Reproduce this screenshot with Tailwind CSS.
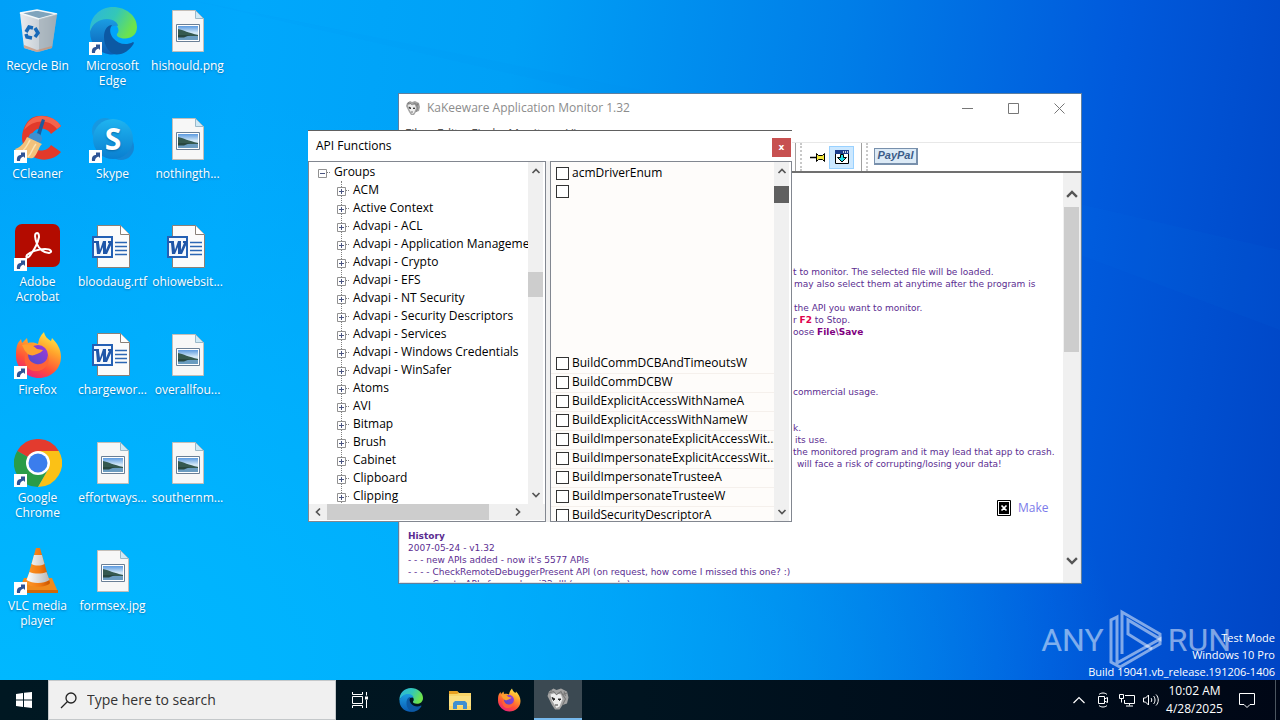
<!DOCTYPE html>
<html lang="en">
<head>
<meta charset="utf-8">
<title>Desktop</title>
<script src="https://cdn.jsdelivr.net/npm/@tailwindcss/browser@4"></script>
</head>
<body class="relative flex h-screen flex-col overflow-hidden bg-[linear-gradient(97deg,#00a0f8_0%,#00a8fc_18%,#00a0f6_38%,#007ee8_62%,#005adc_82%,#0044c4_100%)] font-['Open_Sans','Noto_Sans',sans-serif] text-xs">

<svg class="absolute size-0" aria-hidden="true">
  <defs>
    <linearGradient id="edgeA" x1="0" y1="0" x2="1" y2=".4"><stop offset="0" stop-color="#2cb4e0"/><stop offset=".55" stop-color="#33c7b8"/><stop offset="1" stop-color="#6de34c"/></linearGradient>
    <linearGradient id="edgeB" x1="0" y1="0" x2="0" y2="1"><stop offset="0" stop-color="#1b9de2"/><stop offset="1" stop-color="#0a5cb4"/></linearGradient>
    <linearGradient id="fox" x1=".8" y1="0" x2=".3" y2="1"><stop offset="0" stop-color="#fff14a"/><stop offset=".35" stop-color="#ffa42c"/><stop offset=".7" stop-color="#ff5038"/><stop offset="1" stop-color="#e8207c"/></linearGradient>
    <linearGradient id="foxOrb" x1="1" y1="0" x2="0" y2="1"><stop offset="0" stop-color="#a338d8"/><stop offset="1" stop-color="#4a4fc8"/></linearGradient>
    <linearGradient id="sky" x1="0" y1="0" x2="0" y2="1"><stop offset="0" stop-color="#5c9ae0"/><stop offset=".5" stop-color="#d8ebf8"/><stop offset="1" stop-color="#7fa9c8"/></linearGradient>
    <linearGradient id="skypeG" x1="0" y1="0" x2="0" y2="1"><stop offset="0" stop-color="#1fb4f0"/><stop offset="1" stop-color="#0a7fd0"/></linearGradient>
    <linearGradient id="cone" x1="0" y1="0" x2="1" y2="0"><stop offset="0" stop-color="#ff9a2a"/><stop offset=".6" stop-color="#f07810"/><stop offset="1" stop-color="#c85400"/></linearGradient>
    <linearGradient id="coneW" x1="0" y1="0" x2="1" y2="0"><stop offset="0" stop-color="#ffffff"/><stop offset="1" stop-color="#b8b8b8"/></linearGradient>
    <linearGradient id="binG" x1="0" y1="0" x2="1" y2="0"><stop offset="0" stop-color="#e8ebee"/><stop offset=".6" stop-color="#c4ccd4"/><stop offset="1" stop-color="#98a6b2"/></linearGradient>
  </defs>
  <symbol id="shortcut" viewBox="0 0 13 13"><path d="M0 0h13v13H0z" fill="#fff"/><path d="M3 11c-.5-4 1-6 4-6V2.500h4V8L9.500 6.500C7 7.500 6 8.500 6 11z" fill="#2f5496"/></symbol>
  <symbol id="imgfile" viewBox="0 0 48 48"><path d="M8.500 3.500h23l8 8v33h-31z" fill="#f7f7f7" stroke="#c4beb8"/><path d="M31.500 3.500v8h8z" fill="#cfe9f6" stroke="#9bb8c8"/><path d="M12.500 17.500h23v17h-23z" fill="#fff" stroke="#6a7f96"/><path d="M14 19h20v14H14z" fill="url(#sky)"/><path d="M14 22c5 1 11 4 20 6v1H14z" fill="#35594f"/><path d="M14 29h20v4H14z" fill="#6b9cc0"/><path d="M14 28h12l-6 2.500h-6z" fill="#28473f"/></symbol>
  <symbol id="wordfile" viewBox="0 0 48 48"><path d="M8.500 2.500h23l9 9v33h-32z" fill="#fbfbfb" stroke="#8a8078"/><path d="M31.500 2.500v9h9" fill="#fff" stroke="#8a8078"/><path d="M26 19.500h12M26 23.500h12M26 27.500h12M26 31.500h12" stroke="#2b66b4" stroke-width="1.300"/><path d="M3 13h21v22H3z" fill="#2460b4"/><path d="M5 15h17v18H5z" fill="#f4f8fd"/><path d="M5 18h5v2l1 7 3-9h3v9l3-7h-1v-2h4v2l-5 11h-4v-7l-3 7H8L7 20H5z" fill="#2056a8"/></symbol>
  <symbol id="edge" viewBox="0 0 48 48"><path d="M1 25C0 10 11 0 24 0c13 0 24 9 24 20 0 8-6 11.500-12 11.500S27 29 28 27c2-2 2-5 0-8-3-4-8-6-13-5C8 15 3 19 1 25z" fill="url(#edgeA)"/><path d="M1 25c2-8 9-13 17-13 7 0 11 4 11 7-7-1-11 3-11 9 0 9 7 16 17 15-5 4-10 5-14 4.500C9 46 1 37 1 25z" fill="url(#edgeB)"/><path d="M15 30c0-8 4-12 8-12-3 4-2 9 1 13 5 6 13 8 20 4 1 0 1 1 .5 2C41 43 34 48 27 47.500 20 46 15 39 15 30z" fill="#0c59a4"/></symbol>
  <symbol id="firefox" viewBox="0 0 48 48"><path d="M4 12l3-4 1 4 5-5 1 5c4-1 8 0 10 1 1-6 3-9 6-12 1 5 4 7 7 9l1-3c5 5 9 11 9 19 0 12-10 21-22 21S2 37 2 25c0-5 0-9 2-13z" fill="url(#fox)"/><circle cx="24" cy="24" r="10" fill="url(#foxOrb)"/><path d="M8 14c6-2 11 0 15 4l6 1c-1 2-4 3-6 4-3 1-4 2-7 1-4-1-6-6-8-10z" fill="#ffa02e"/><path d="M12 20c1 10 8 14 14 13 5-1 8-5 8-9 3 8-3 16-12 16S8 32 12 20z" fill="#ff6436" opacity=".85"/></symbol>
  <symbol id="mask" viewBox="0 0 16 16"><path d="M2 3l3-2 2 1 3-1 4 2 1 4-1 4-3 1-2 3H6l-2-3-2-4-1-2z" fill="#a4a4a4"/><path d="M3 5l3-1 4 1 1 3-2 5-2 1-3-5z" fill="#eee"/><path d="M4 7l2 1-1 1zM8 8h2L9 9zM6 12h2" fill="#222" stroke="#222" stroke-width=".6"/><path d="M2 4l3-1 2 2 3-2 1 2 3-1M11 5l2 3-2 4M12 3l1 3M3 3l1-1" fill="none" stroke="#777" stroke-width=".7"/></symbol>
  <symbol id="up" viewBox="0 0 10 10"><path d="M1.500 7L5 3.500 8.500 7" fill="none" stroke="#555" stroke-width="1.700"/></symbol>
  <symbol id="down" viewBox="0 0 10 10"><path d="M1.500 3L5 6.500 8.500 3" fill="none" stroke="#555" stroke-width="1.700"/></symbol>
  <symbol id="plus" viewBox="0 0 9 9"><path d="M.5.5h8v8h-8z" fill="#fff" stroke="#919191"/><path d="M2 4.500h5M4.500 2v5" stroke="#4a5480"/></symbol>
  <symbol id="minus" viewBox="0 0 9 9"><path d="M.5.5h8v8h-8z" fill="#fff" stroke="#919191"/><path d="M2 4.500h5" stroke="#4a5480"/></symbol>
</svg>

<main class="relative min-h-0 flex-1 bg-[radial-gradient(ellipse_at_0%_100%,#00b8ff_0%,#00b4ff99_35%,transparent_62%)]">
  <svg class="pointer-events-none absolute inset-0 size-full" viewBox="0 0 1280 680" preserveAspectRatio="none" aria-hidden="true"><path d="M190 0L1280 250V330L640 90z" fill="#0088ee" opacity=".06"/></svg>

  <ul class="absolute top-0 left-0 grid grid-flow-col grid-cols-[repeat(3,75px)] grid-rows-[repeat(6,108px)] text-center leading-[15px] text-white [text-shadow:0_1px_2px_#00508899] [&_a]:flex [&_a]:flex-col [&_a]:items-center [&_a]:gap-[3px] [&_a]:pt-[7px]">
    <li><a href="#"><svg class="size-12" viewBox="0 0 48 48"><path d="M6 6l17-3 20 4-5 34-15 4-13-4z" fill="url(#binG)"/><path d="M6 6l17-3 20 4-18 5z" fill="#7fa4bd" stroke="#f4f8fa" stroke-width="1.500"/><path d="M25 12l18-5-5 34-13 4z" fill="#a3afb8" opacity=".7"/><path d="M10 38l13 5 15-4v2l-15 4-13-4z" fill="#c98f70" opacity=".7"/><g fill="none" stroke="#1769b8" stroke-width="3.500"><path d="M12 25l3-5 4 1M21 21l3 5-3 4M18 31l-5-1-1-3"/></g></svg><span>Recycle Bin</span></a></li>
    <li><a href="#"><span class="relative"><svg class="size-12" viewBox="0 0 48 48"><path d="M25 1a23 23 0 0 1 22 10l-10 8a11 11 0 1 0 0 11l10 7A22 22 0 0 1 25 44 22 22 0 0 1 9 16C12 6 18 1 25 1z" fill="#e23a2a"/><path d="M28 1a23 23 0 0 1 19 10l-4 3C35 4 20 4 10 15 13 6 19 1 28 1z" fill="#f4644c"/><path d="M28 4l3 1-6 20-4-1z" fill="#1d5c9c"/><path d="M16 19c5-3 13 0 12 6l-3 4-11-6z" fill="#3f8fd0"/><path d="M13 22l15 7c-4 4-4 10-9 14-5 1-13-1-18-9 6-2 9-6 12-12z" fill="#f2c27c"/><path d="M7 37c5-3 6-7 9-12M14 42c4-4 4-8 8-13" stroke="#fce4b4" stroke-width="1.500" fill="none"/></svg><svg class="absolute bottom-0 left-0 size-[13px]"><use href="#shortcut"/></svg></span><span>CCleaner</span></a></li>
    <li><a href="#"><span class="relative"><svg class="size-12" viewBox="0 0 48 48"><rect x="1" y="1" width="45" height="43" rx="7" fill="#b30b00"/><path d="M23 10c-3 0-2 6 0 11 2 5 7 9 12 9 4-1 2-4-4-4-7 0-15 3-18 6-2 3 1 4 4-1 3-4 7-12 8-17 0-3-1-4-2-4z" fill="none" stroke="#fff" stroke-width="2"/></svg><svg class="absolute bottom-0 left-0 size-[13px]"><use href="#shortcut"/></svg></span><span>Adobe<br>Acrobat</span></a></li>
    <li><a href="#"><span class="relative"><svg class="size-12"><use href="#firefox"/></svg><svg class="absolute bottom-0 left-0 size-[13px]"><use href="#shortcut"/></svg></span><span>Firefox</span></a></li>
    <li><a href="#"><span class="relative"><svg class="size-12" viewBox="0 0 48 48"><path d="M24 24L3.200 12A24 24 0 0 1 44.800 12z" fill="#e33b2e"/><path d="M3.200 12A24 24 0 0 0 24 48l10.400-18L24 24z" fill="#2a9c48"/><path d="M24 12h20.800A24 24 0 0 1 24 48l10.400-18z" fill="#fbc116"/><circle cx="24" cy="24" r="12" fill="#fff"/><circle cx="24" cy="24" r="9.500" fill="#3b7ded"/></svg><svg class="absolute bottom-0 left-0 size-[13px]"><use href="#shortcut"/></svg></span><span>Google<br>Chrome</span></a></li>
    <li><a href="#"><span class="relative"><svg class="size-12" viewBox="0 0 48 48"><path d="M10 31h28l6 14H4z" fill="#f08a1c"/><path d="M4 43h40v3H4z" fill="#d06808"/><path d="M22 1h4l10 35c-4 5-20 5-24 0z" fill="url(#cone)"/><path d="M20 8h8l2.500 9c-4 2-9 2-13 0zM15.500 25c5 2 12 2 17 0l3 8c-6 4-17 4-23 0z" fill="url(#coneW)"/></svg><svg class="absolute bottom-0 left-0 size-[13px]"><use href="#shortcut"/></svg></span><span>VLC media<br>player</span></a></li>

    <li><a href="#"><span class="relative"><svg class="size-12"><use href="#edge"/></svg><svg class="absolute bottom-0 left-0 size-[13px]"><use href="#shortcut"/></svg></span><span>Microsoft<br>Edge</span></a></li>
    <li><a href="#"><span class="relative"><svg class="size-12" viewBox="0 0 48 48"><circle cx="16" cy="16" r="13" fill="#1798e0"/><circle cx="32" cy="32" r="13" fill="#1486d4"/><circle cx="24" cy="24" r="20" fill="url(#skypeG)"/><text x="24" y="35" text-anchor="middle" font-family="Open Sans" font-weight="700" font-size="30" fill="#fff">S</text></svg><svg class="absolute bottom-0 left-0 size-[13px]"><use href="#shortcut"/></svg></span><span>Skype</span></a></li>
    <li><a href="#"><svg class="size-12"><use href="#wordfile"/></svg><span>bloodaug.rtf</span></a></li>
    <li><a href="#"><svg class="size-12"><use href="#wordfile"/></svg><span>chargewor...</span></a></li>
    <li><a href="#"><svg class="size-12"><use href="#imgfile"/></svg><span>effortways...</span></a></li>
    <li><a href="#"><svg class="size-12"><use href="#imgfile"/></svg><span>formsex.jpg</span></a></li>

    <li><a href="#"><svg class="size-12"><use href="#imgfile"/></svg><span>hishould.png</span></a></li>
    <li><a href="#"><svg class="size-12"><use href="#imgfile"/></svg><span>nothingth...</span></a></li>
    <li><a href="#"><svg class="size-12"><use href="#wordfile"/></svg><span>ohiowebsit...</span></a></li>
    <li><a href="#"><svg class="size-12"><use href="#imgfile"/></svg><span>overallfou...</span></a></li>
    <li><a href="#"><svg class="size-12"><use href="#imgfile"/></svg><span>southernm...</span></a></li>
  </ul>

  <!-- Application Monitor window -->
  <section class="absolute top-[93px] left-[398px] flex h-[491px] w-[684px] flex-col border border-[#5f7f9f] bg-white">
    <header class="-mr-px flex h-[28px] shrink-0 items-center text-[#8c8c8c]">
      <svg class="mr-1.5 ml-1.5 size-4"><use href="#mask"/></svg>
      <h1 class="flex-1">KaKeeware Application Monitor 1.32</h1>
      <button aria-label="Minimize" class="grid h-full w-[45px] place-items-center"><svg class="size-[11px]" viewBox="0 0 11 11"><path d="M0 5.500h11" stroke="#777"/></svg></button>
      <button aria-label="Maximize" class="grid h-full w-[46px] place-items-center"><svg class="size-[11px]" viewBox="0 0 11 11"><path d="M.5.5h10v10H.5z" fill="none" stroke="#777"/></svg></button>
      <button aria-label="Close" class="grid h-full w-[46px] place-items-center"><svg class="size-[11px]" viewBox="0 0 11 11"><path d="M.5.5l10 10M10.500.5l-10 10" stroke="#777"/></svg></button>
    </header>
    <nav class="flex h-[20px] shrink-0 items-center gap-[13px] pt-1 pl-1.5 text-[#555]">
      <button>File</button><button>Edit</button><button>Find</button><button>Monitor</button><button>View</button>
    </nav>
    <div class="flex h-[31px] shrink-0 items-center border-t border-b-2 border-t-[#e8e8e8] border-b-[#707070] pl-[396px]">
      <span class="h-full border-l border-[#a0a0a0]"></span>
      <span class="ml-1 h-full border-l-2 border-dotted border-[#c8c8c8]"></span>
      <button aria-label="Pin" class="ml-1.5 p-0.5"><svg class="size-4" viewBox="0 0 16 16"><path d="M0 8.500h6" stroke="#000" stroke-width="1.500"/><path d="M6.500 4.500v8l2-2h4l2 2v-8l-2 2h-4z" fill="#f4e83c" stroke="#000"/></svg></button>
      <button aria-label="Functions window" class="ml-0.5 grid h-[21px] w-[23px] place-items-center bg-[#cce8ff] outline outline-[#99d1ff]"><svg class="size-[14px]" viewBox="0 0 14 14"><path d="M.5.5h13v13H.5z" fill="#fff" stroke="#000"/><path d="M0 0h14v4H0z" fill="#1c3c8c"/><path d="M8 2h1M10 2h1M12 2h1" stroke="#fff" stroke-width="1.500"/><path d="M5.500 4.500h3v3h3L7 12 2.500 7.500h3z" fill="#20dce8" stroke="#000"/></svg></button>
      <span class="ml-2 h-full border-l border-[#a0a0a0]"></span>
      <span class="ml-1 h-full border-l-2 border-dotted border-[#c8c8c8]"></span>
      <button class="ml-1.5 mb-0.5 grid h-[17px] w-[44px] place-items-center border border-r-2 border-b-2 border-[#7890ac] bg-[#dceaf6] font-['Liberation_Sans',sans-serif] text-[11px] leading-none font-bold text-[#3c5c88] italic">PayPal</button>
    </div>
    <div class="flex min-h-0 flex-1 border-r border-b border-l border-[#e4e4e4]">
      <article class="min-w-0 flex-1 overflow-hidden pt-[93px] pl-2 font-['DejaVu_Sans','Liberation_Sans',sans-serif] text-[9px] leading-3 whitespace-nowrap text-[#5b2d91]">
        <div class="pl-[385px]">
          <p>t to monitor. The selected file will be loaded.</p>
          <p class="pl-px">may also select them at anytime after the program is</p>
          <p class="mt-3 pl-px">the API you want to monitor.</p>
          <p>r <b class="text-[#e0004c]">F2</b> to Stop.</p>
          <p>oose <b class="text-[#800080]">File\Save</b></p>
          <p class="mt-12">commercial usage.</p>
          <p class="mt-6">k.</p>
          <p class="pl-0.5">its use.</p>
          <p>the monitored program and it may lead that app to crash.</p>
          <p class="pl-1">will face a risk of corrupting/losing your data!</p>
        </div>
        <a href="#" class="mt-[30px] flex items-center gap-[7px] pl-[589px] font-['Open_Sans',sans-serif] text-xs leading-4 text-[#7b7bea]">
          <svg class="h-4 w-[14px]" viewBox="0 0 14 16"><path d="M.5.5h13v15H.5z" fill="#fff" stroke="#000"/><path d="M2 2h10v12H2z"/><path d="M4.500 5.500l5 5M9.500 5.500l-5 5" stroke="#fff" stroke-width="1.700"/></svg>Make</a>
        <h2 class="mt-3.5 font-bold">History</h2>
        <p>2007-05-24 - v1.32</p>
        <p>- - - new APIs added - now it's 5577 APIs</p>
        <p>- - - - CheckRemoteDebuggerPresent API (on request, how come I missed this one? :)</p>
        <p>- - - - Crypto APIs from advapi32.dll (on request :)</p>
      </article>
      <div class="flex w-[17px] flex-col items-center bg-[#f0f0f0] pt-3.5">
        <svg class="size-[14px]"><use href="#up"/></svg>
        <div class="mt-[6px] h-[145px] w-[15px] bg-[#cdcdcd]"></div>
        <svg class="mt-auto mb-[14px] size-[14px]"><use href="#down"/></svg>
      </div>
    </div>
  </section>

  <!-- API Functions tool window -->
  <section class="absolute top-[130px] left-[308px] flex h-[392px] w-[484px] flex-col border-t border-[#606060] bg-white">
    <header class="flex h-[30px] shrink-0 items-center justify-between pl-2">
      <h2>API Functions</h2>
      <button aria-label="Close" class="mt-0.5 mr-px grid size-[19px] place-items-center bg-[#c75050] font-['DejaVu_Sans',sans-serif] text-[9px] leading-none font-bold text-white">x</button>
    </header>
    <div class="flex min-h-0 flex-1 gap-1 bg-[#f0f0f0]">
      <div class="flex w-[238px] flex-col border border-[#828790] bg-white">
        <div class="flex min-h-0 flex-1">
          <div class="min-w-0 flex-1 overflow-hidden pt-px whitespace-nowrap">
            <div class="flex h-[18px] items-center pl-[9px]"><button aria-label="Collapse Groups" class="pt-0.5"><svg class="size-[9px]"><use href="#minus"/></svg></button><span class="mr-1 w-[3px] border-t border-dotted border-[#808080]"></span>Groups</div>
            <ul class="relative before:absolute before:top-0 before:left-8 before:h-full before:border-l before:border-dotted before:border-[#808080] [&_span]:mr-1 [&_span]:w-[3px] [&_span]:shrink-0 [&_span]:border-t [&_span]:border-dotted [&_span]:border-[#808080] [&_svg]:relative [&_svg]:size-[9px] [&>li]:flex [&>li]:h-[18px] [&>li]:items-center [&>li]:pl-7 [&_button]:shrink-0 [&_button]:pt-0.5">
              <li><button aria-label="Expand"><svg><use href="#plus"/></svg></button><span></span>ACM</li>
              <li><button aria-label="Expand"><svg><use href="#plus"/></svg></button><span></span>Active Context</li>
              <li><button aria-label="Expand"><svg><use href="#plus"/></svg></button><span></span>Advapi - ACL</li>
              <li><button aria-label="Expand"><svg><use href="#plus"/></svg></button><span></span>Advapi - Application Management</li>
              <li><button aria-label="Expand"><svg><use href="#plus"/></svg></button><span></span>Advapi - Crypto</li>
              <li><button aria-label="Expand"><svg><use href="#plus"/></svg></button><span></span>Advapi - EFS</li>
              <li><button aria-label="Expand"><svg><use href="#plus"/></svg></button><span></span>Advapi - NT Security</li>
              <li><button aria-label="Expand"><svg><use href="#plus"/></svg></button><span></span>Advapi - Security Descriptors</li>
              <li><button aria-label="Expand"><svg><use href="#plus"/></svg></button><span></span>Advapi - Services</li>
              <li><button aria-label="Expand"><svg><use href="#plus"/></svg></button><span></span>Advapi - Windows Credentials</li>
              <li><button aria-label="Expand"><svg><use href="#plus"/></svg></button><span></span>Advapi - WinSafer</li>
              <li><button aria-label="Expand"><svg><use href="#plus"/></svg></button><span></span>Atoms</li>
              <li><button aria-label="Expand"><svg><use href="#plus"/></svg></button><span></span>AVI</li>
              <li><button aria-label="Expand"><svg><use href="#plus"/></svg></button><span></span>Bitmap</li>
              <li><button aria-label="Expand"><svg><use href="#plus"/></svg></button><span></span>Brush</li>
              <li><button aria-label="Expand"><svg><use href="#plus"/></svg></button><span></span>Cabinet</li>
              <li><button aria-label="Expand"><svg><use href="#plus"/></svg></button><span></span>Clipboard</li>
              <li><button aria-label="Expand"><svg><use href="#plus"/></svg></button><span></span>Clipping</li>
            </ul>
          </div>
          <div class="mr-0.5 flex w-[15px] flex-col items-center bg-[#f0f0f0] py-1">
            <svg class="size-[10px]"><use href="#up"/></svg>
            <div class="mt-24 h-[25px] w-full bg-[#cdcdcd]"></div>
            <svg class="mt-auto size-[10px]"><use href="#down"/></svg>
          </div>
        </div>
        <div class="mb-px flex h-4 shrink-0 items-center bg-[#f0f0f0] pl-1">
          <svg class="size-[10px] -rotate-90"><use href="#up"/></svg>
          <div class="ml-1 h-full w-[162px] bg-[#cdcdcd]"></div>
          <svg class="ml-6 size-[10px] rotate-90"><use href="#up"/></svg>
        </div>
      </div>
      <div class="flex min-w-0 flex-1 border border-[#828790] bg-white">
        <ul class="min-w-0 flex-1 overflow-hidden bg-[#fefcfa] pt-[3px] whitespace-nowrap [&_input]:mr-[3px] [&_input]:size-[13px] [&_input]:shrink-0 [&_input]:appearance-none [&_input]:border [&_input]:border-[#333] [&_input]:bg-white [&_label]:flex [&_label]:items-center [&>li]:h-[19px] [&>li]:border-b [&>li]:border-[#f5f0ec] [&>li]:pl-[5px]">
          <li class="border-none!"><label><input type="checkbox">acmDriverEnum</label></li>
          <li class="border-none! pt-px"><input type="checkbox" aria-label="Function" class="block"></li>
          <li class="h-[152px]! border-none!" aria-hidden="true"></li>
          <li><label><input type="checkbox">BuildCommDCBAndTimeoutsW</label></li>
          <li><label><input type="checkbox">BuildCommDCBW</label></li>
          <li><label><input type="checkbox">BuildExplicitAccessWithNameA</label></li>
          <li><label><input type="checkbox">BuildExplicitAccessWithNameW</label></li>
          <li><label><input type="checkbox">BuildImpersonateExplicitAccessWit...</label></li>
          <li><label><input type="checkbox">BuildImpersonateExplicitAccessWit...</label></li>
          <li><label><input type="checkbox">BuildImpersonateTrusteeA</label></li>
          <li><label><input type="checkbox">BuildImpersonateTrusteeW</label></li>
          <li><label><input type="checkbox">BuildSecurityDescriptorA</label></li>
        </ul>
        <div class="mr-0.5 flex w-[15px] flex-col items-center bg-[#f0f0f0] py-1">
          <svg class="size-[10px]"><use href="#up"/></svg>
          <div class="mt-2.5 h-[17px] w-full bg-[#606060]"></div>
          <svg class="mt-auto size-[10px]"><use href="#down"/></svg>
        </div>
      </div>
    </div>
  </section>

  <!-- Watermark and build information -->
  <div class="absolute right-[49px] bottom-[9px] flex items-center gap-1 font-['Roboto',sans-serif] text-[32px] leading-none text-white/50" aria-hidden="true">
    <span>ANY</span>
    <svg class="h-[62px] w-[56px]" viewBox="0 0 56 62" fill="none" stroke="#fff" stroke-opacity=".5" stroke-width="3"><path d="M14 45V3l38 22v5L20 11v14l24 15"/><path d="M9 8L3 11v42l9 5 40-23v-5L9 54z"/></svg>
    <span>RUN</span>
  </div>
  <div class="absolute right-[5px] bottom-0 text-right text-[11px] leading-[17px] text-white"><p>Test Mode</p><p>Windows 10 Pro</p><p>Build 19041.vb_release.191206-1406</p></div>
</main>

<footer class="flex h-10 shrink-0 items-center bg-[linear-gradient(90deg,#001822,#001420_50%,#000716)] text-white">
  <button aria-label="Start" class="grid h-full w-12 place-items-center"><svg class="size-4" viewBox="0 0 16 16"><path d="M0 2l7-1v6.500H0zM8 .8L16 0v7.500H8zM0 8.500h7V15l-7-1zM8 8.500h8V16l-8-1z" fill="#fff"/></svg></button>
  <label class="flex h-full w-72 items-center gap-2.5 border border-[#c4c8ca] bg-[#f0f0f0] pl-[11px]">
    <svg class="size-[17px]" viewBox="0 0 17 17" fill="none" stroke="#222" stroke-width="1.300"><circle cx="11" cy="6" r="5"/><path d="M7.500 9.500L1 16"/></svg>
    <input type="text" aria-label="Search" placeholder="Type here to search" class="min-w-0 flex-1 text-[14px] text-[#222] outline-none placeholder:text-[#333]">
  </label>
  <button aria-label="Task View" class="grid h-full w-12 place-items-center"><svg class="size-4" viewBox="0 0 16 16" fill="none" stroke="#fff"><path d="M.5 0v2.500h10V0M.5 16v-2.500h10V16M.5 4.500h10v7H.5zM14.500 0v3.500M14.500 8v8"/><path d="M13 4.500h3v3h-3z" fill="#fff" stroke="none"/></svg></button>
  <button aria-label="Microsoft Edge" class="grid h-full w-[54px] place-items-center"><svg class="size-6"><use href="#edge"/></svg></button>
  <button aria-label="File Explorer" class="grid h-full w-11 place-items-center"><svg class="size-6" viewBox="0 0 24 24"><path d="M1 3h8l2 2h12v17H1z" fill="#f9d568"/><path d="M1 3h8l2 2-2 1H1z" fill="#e8a020"/><path d="M1 8h22v10H1z" fill="#fbdf80"/><path d="M5 21v-6l2-2h10l2 2v6h-4v-4H9v4z" fill="#3f8fd0"/></svg></button>
  <button aria-label="Firefox" class="grid h-full w-[54px] place-items-center"><svg class="size-6"><use href="#firefox"/></svg></button>
  <button aria-label="KaKeeware Application Monitor" class="-ml-0.5 grid h-full w-12 place-items-center border-b-2 border-[#76b9ed] bg-[#3b4952]"><svg class="size-6"><use href="#mask"/></svg></button>
  <div class="ml-auto flex h-full items-center">
    <button aria-label="Show hidden icons" class="grid w-6 place-items-center"><svg class="h-2 w-3" viewBox="0 0 12 8"><path d="M.5 7L6 1.500 11.500 7" fill="none" stroke="#fff" stroke-width="1.200"/></svg></button>
    <button aria-label="Meet Now" class="grid w-6 place-items-center"><svg class="size-4" viewBox="0 0 16 16" fill="none" stroke="#fff"><path d="M3.500 4.500h6v7h-6zM9.500 7l3-1.500v5l-3-1.500M4 2.500c2-2 6-2 8 0M4 13.500c2 2 6 2 8 0"/></svg></button>
    <button aria-label="Network" class="grid w-6 place-items-center"><svg class="size-4" viewBox="0 0 16 16" fill="none" stroke="#fff"><path d="M6 3.500h9.500v8H5.500V8M.5 2.500h4v4h-4zM2.500 6.500v4M10.500 11.500v2M7 14h7"/></svg></button>
    <button aria-label="Volume" class="grid w-6 place-items-center"><svg class="size-4" viewBox="0 0 16 16" fill="none" stroke="#fff"><path d="M.5 6h2l3-3v10l-3-3h-2zM8 6c1 1 1 3 0 4M10.500 4c2 2 2 6 0 8M13 2.500c3 3 3 8 0 11"/></svg></button>
    <time class="w-[63px] text-center leading-[18px]">10:02 AM<br>4/28/2025</time>
    <button aria-label="Notifications" class="grid w-[42px] place-items-center"><svg class="size-4" viewBox="0 0 16 16" fill="none" stroke="#fff"><path d="M.5 1.500h15v11H11l-3 3-3-3H.500z"/></svg></button>
    <span class="mr-1 ml-[7px] h-full border-l border-[#4c5660]"></span>
  </div>
</footer>
</body>
</html>
